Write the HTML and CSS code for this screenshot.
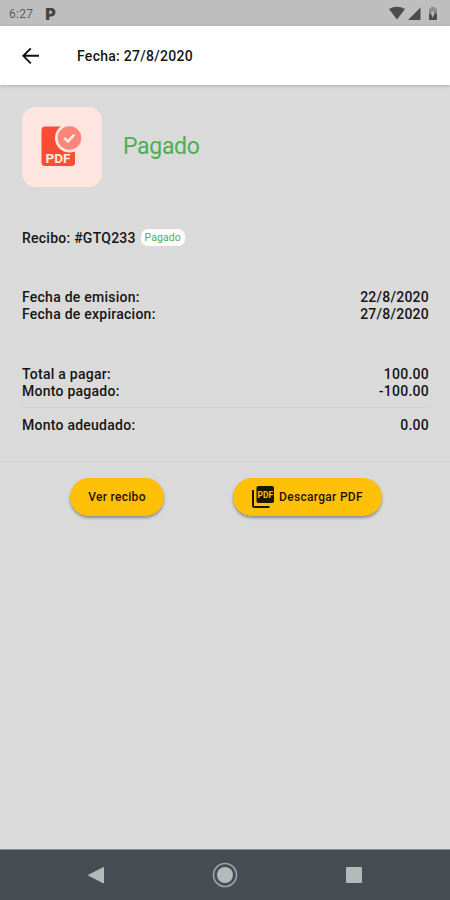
FILE: index.html
```html
<!DOCTYPE html>
<html lang="es">
<head>
    <meta charset="UTF-8">
    <meta name="viewport" content="width=device-width, initial-scale=1.0">
    <title>Recibo</title>
    <link rel="stylesheet" href="styles.css">
</head>
<body>
    <div class="screen">
        <div class="status-bar">
            <span class="clock">6:27</span>
            <span class="carrier">P</span>
            <svg class="status-icons" width="52" height="16" viewBox="0 0 52 16">
                <path d="M1 3Q9 -1.400 17 3L9 13.500z" fill="#4c4c4c"/>
                <path d="M32.500 1.500v12.500H20z" fill="#4c4c4c"/>
                <path d="M41 2.500h2V1h4v1.500h2V8h-8z" fill="#8d8d8d"/>
                <path d="M41 7.500h8V14h-8z" fill="#4c4c4c"/>
                <path d="M45.300 4l-2.600 5h1.500v3.200l2.500-4.800h-1.400z" fill="#c0c0c0"/>
            </svg>
        </div>

        <header class="app-bar">
            <button class="back-btn" aria-label="Atras">
                <svg width="18" height="18" viewBox="0 0 18 18" fill="none" stroke="#111" stroke-width="1.900">
                    <path d="M17 8.800H1.500M8.800 1.300L1.300 8.800l7.500 7.500"/>
                </svg>
            </button>
            <h1>Fecha: 27/8/2020</h1>
        </header>

        <main class="content">
            <div class="summary">
                <div class="pdf-badge">
                    <svg width="42" height="42" viewBox="0 0 42 42">
                        <rect x="0.500" y="0.500" width="33.500" height="39.500" rx="3.500" fill="#fb4d33"/>
                        <circle cx="28.500" cy="12" r="14.500" fill="#ffe5e0"/>
                        <circle cx="28.500" cy="12" r="11.800" fill="#fb8677"/>
                        <path d="M23.300 12l3.700 3.500 6.300-6.800" fill="none" stroke="#ffe9e5" stroke-width="2.600"/>
                        <text class="pdf-text" x="4.500" y="36.800" textLength="25" lengthAdjust="spacingAndGlyphs">PDF</text>
                    </svg>
                </div>
                <span class="summary-status">Pagado</span>
            </div>

            <div class="receipt">
                <span>Recibo: #GTQ233</span>
                <span class="chip">Pagado</span>
            </div>

            <div class="group dates">
                <div class="row"><span>Fecha de emision:</span><span>22/8/2020</span></div>
                <div class="row"><span>Fecha de expiracion:</span><span>27/8/2020</span></div>
            </div>

            <div class="group totals">
                <div class="row"><span>Total a pagar:</span><span>100.00</span></div>
                <div class="row"><span>Monto pagado:</span><span>-100.00</span></div>
            </div>

            <div class="group due">
                <div class="row"><span>Monto adeudado:</span><span>0.00</span></div>
            </div>
        </main>

        <div class="actions">
            <button class="btn view-btn">Ver recibo</button>
            <button class="btn download-btn">
                <svg width="22" height="22" viewBox="0 0 22 22">
                    <path d="M1 4v15.500q0 1.500 1.500 1.500H17.500" fill="none" stroke="#1c1600" stroke-width="2"/>
                    <rect x="4.500" y="0" width="17.500" height="17" rx="1.800" fill="#1c1600"/>
                    <text class="mini-pdf" x="5.500" y="11.500" textLength="15.500" lengthAdjust="spacingAndGlyphs">PDF</text>
                </svg>
                <span>Descargar PDF</span>
            </button>
        </div>

        <nav class="nav-bar">
            <svg width="26" height="26" viewBox="0 0 26 26">
                <path d="M20.500 5.500v15.500L5.500 13.200z" fill="#b4baba" stroke="#b4baba" stroke-linejoin="round"/>
            </svg>
            <svg width="26" height="26" viewBox="0 0 26 26">
                <circle cx="13" cy="13" r="11.500" fill="none" stroke="#9ea5a7" stroke-width="1.600"/>
                <circle cx="13" cy="13" r="8" fill="#b4baba"/>
            </svg>
            <svg width="26" height="26" viewBox="0 0 26 26">
                <rect x="5" y="5" width="16" height="16" rx="1" fill="#b4baba"/>
            </svg>
        </nav>
    </div>
</body>
</html>
```
FILE: styles.css
```css
* {
    margin: 0;
    padding: 0;
    box-sizing: border-box;
    font-family: Roboto, 'Liberation Sans', sans-serif;
}

body {
    background: #dadada;
}

.screen {
    height: 900px;
    display: flex;
    flex-direction: column;
    background: #dadada;
    color: #151515;
}

.status-bar {
    height: 26px;
    padding: 1px 10px 0 9px;
    display: flex;
    align-items: center;
    background: #bebebe;
    color: #5c5c5c;
}

.clock {
    font-size: 12px;
    letter-spacing: 0.3px;
}

.carrier {
    margin-left: 12px;
    font-family: Inter, sans-serif;
    font-size: 16px;
    font-weight: 900;
    color: #444;
}

.status-icons {
    margin-left: auto;
}

.app-bar {
    height: 59px;
    padding-left: 22px;
    display: flex;
    align-items: center;
    background: #fff;
    box-shadow: 0 1px 3px rgba(0, 0, 0, 0.2);
}

.back-btn {
    width: 18px;
    height: 18px;
    border: none;
    background: none;
}

.back-btn svg {
    display: block;
}

h1 {
    margin-left: 37px;
    font-size: 14px;
    font-weight: 500;
    letter-spacing: 0.28px;
}

.content {
    padding: 22px 21px 0 22px;
    border-bottom: 1px solid #d3d3d3;
    height: 377px;
    font-size: 14px;
    font-weight: 500;
    letter-spacing: 0.25px;
}

.summary {
    display: flex;
    align-items: center;
}

.pdf-badge {
    width: 80px;
    height: 80px;
    border-radius: 14px;
    background: #ffe5e0;
    display: flex;
    align-items: center;
    justify-content: center;
}

.pdf-text {
    font-size: 13px;
    font-weight: 700;
    letter-spacing: 0;
    fill: #ffe9e5;
}

.summary-status {
    margin-left: 21px;
    padding-bottom: 2px;
    font-size: 23px;
    font-weight: 400;
    letter-spacing: -0.3px;
    color: #4caf50;
}

.receipt {
    margin-top: 42px;
    height: 17px;
    display: flex;
    align-items: center;
}

.chip {
    margin-left: 5px;
    width: 44px;
    height: 17px;
    line-height: 17px;
    text-align: center;
    border-radius: 7px;
    background: #fff;
    color: #4caf50;
    font-size: 10.5px;
    font-weight: 400;
    letter-spacing: 0.1px;
}

.row {
    height: 17px;
    line-height: 17px;
    display: flex;
    justify-content: space-between;
}

.dates {
    margin-top: 43px;
}

.totals {
    margin-top: 43px;
    padding-bottom: 7px;
    border-bottom: 1px solid #d0d0d0;
}

.due {
    margin-top: 9px;
}

.actions {
    flex: 1;
    padding: 16px 68px 0 70px;
    display: flex;
    align-items: flex-start;
    justify-content: space-between;
}

.btn {
    height: 38px;
    border: none;
    border-radius: 19px;
    background: #ffc107;
    color: #1c1600;
    font-size: 12px;
    font-weight: 500;
    letter-spacing: 0.3px;
    display: flex;
    align-items: center;
    justify-content: center;
    box-shadow: 0 2px 3px rgba(0, 0, 0, 0.35);
}

.view-btn {
    width: 94px;
}

.download-btn {
    width: 149px;
    gap: 5px;
}

.mini-pdf {
    font-size: 9px;
    font-weight: 700;
    letter-spacing: 0;
    fill: #ffc107;
}

.nav-bar {
    height: 51px;
    padding: 0 83px 0 83px;
    display: flex;
    align-items: center;
    justify-content: space-between;
    background: #464e53;
    border-top: 1px solid #858a8c;
}
```
